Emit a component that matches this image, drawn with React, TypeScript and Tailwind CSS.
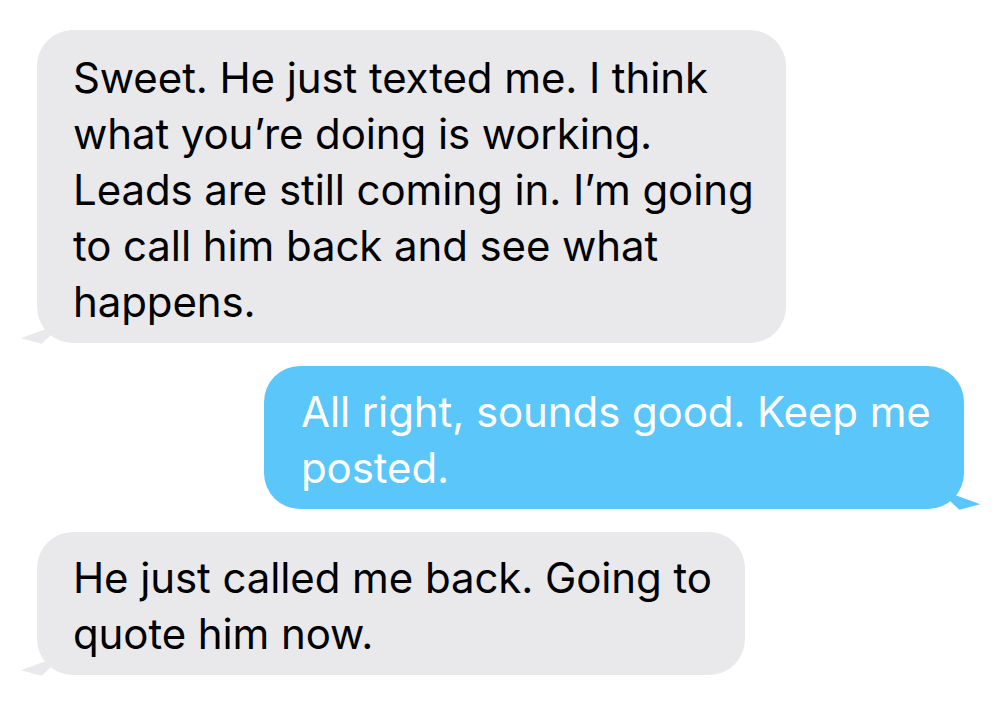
import type { ReactNode } from "react"

const FONT = "font-['Inter','Roboto','Noto_Sans',sans-serif]"

function Received({ width, pad, children }: { width: string; pad: string; children: ReactNode }) {
  return (
    <div className={`relative ml-[37px] ${width} ${pad} rounded-[36px] bg-[#e9e9eb] pl-[36px] pr-[30px] pb-[13px] text-black`}>
      {children}
      {/* tail */}
      <svg className="absolute -left-[18px] -bottom-[1px] w-[36px] h-[20px]" viewBox="0 0 36 20">
        <polygon points="1.7,14.3 27.7,4.7 32.7,10.3 22.7,19.7" fill="#e9e9eb" />
      </svg>
    </div>
  )
}

function Sent({ width, children }: { width: string; children: ReactNode }) {
  return (
    <div className={`relative self-end mr-[36px] ${width} rounded-[36px] bg-[#5ac6f9] pl-[37px] pr-[30px] pt-[18px] pb-[13px] text-white`}>
      {children}
      <svg className="absolute -right-[18px] -bottom-[1px] w-[36px] h-[20px]" viewBox="0 0 36 20">
        <polygon points="34.3,14.3 8.3,4.7 3.3,10.3 13.3,19.7" fill="#5ac6f9" />
      </svg>
    </div>
  )
}

export default function App() {
  return (
    <div className={`w-[1000px] h-[706px] bg-white overflow-hidden flex flex-col pt-[30px] gap-[23px] text-[42px] leading-[56px] tracking-[-0.1px] ${FONT}`}>
      <Received width="w-[749px]" pad="pt-[20px]">
        Sweet. He just texted me. I think
        <br />
        what you’re doing is working.
        <br />
        Leads are still coming in. I’m going
        <br />
        to call him back and see what
        <br />
        happens.
      </Received>

      <Sent width="w-[700px]">
        All right, sounds good. Keep me
        <br />
        posted.
      </Sent>

      <Received width="w-[708px]" pad="pt-[18px]">
        He just called me back. Going to
        <br />
        quote him now.
      </Received>
    </div>
  )
}
